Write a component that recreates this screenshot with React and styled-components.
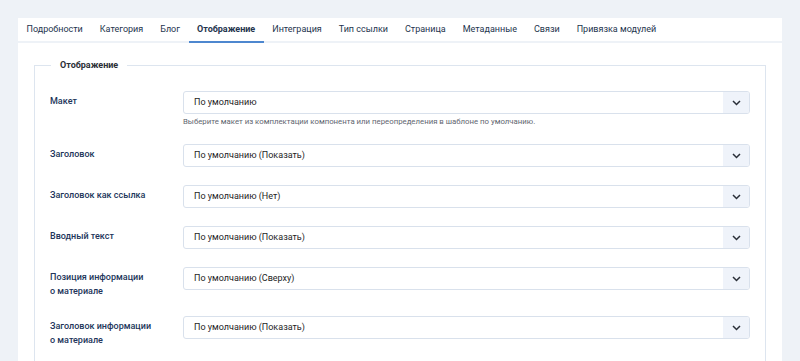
import styled, { createGlobalStyle } from "styled-components"

const GlobalStyle = createGlobalStyle`
  body {
    margin: 0;
    background: #eef2f7;
    font-family: Roboto, "Liberation Sans", sans-serif;
  }
`

const Page = styled.div`
  padding: 18px 18px 0 18px;
  height: 343px;
  overflow: hidden;
`

const Panel = styled.div`
  background: #fff;
  height: 100%;
`

const TabBar = styled.nav`
  display: flex;
  border-bottom: 2px solid #eef2f7;
`

const Tab = styled.div`
  padding: 0 8.5px;
  height: 23px;
  line-height: 23px;
  font-size: 9px;
  color: #24344d;
  font-weight: ${(p) => (p.$active ? 700 : 400)};
  border-bottom: 2px solid ${(p) => (p.$active ? "#4d87cf" : "transparent")};
  margin-bottom: -2px;
  white-space: nowrap;
`

const Content = styled.div`
  padding: 16px 16px 0 16px;
`

const Fieldset = styled.fieldset`
  margin: 0;
  padding: 0 15px 16px 15px;
  border: 1px solid #dde5ef;
  border-bottom: none;
  min-width: 0;
`

const Legend = styled.legend`
  margin-left: 1px;
  padding: 0 9px;
  font-size: 9px;
  font-weight: 700;
  color: #2b2f36;
  line-height: 13px;
`

const Rows = styled.div`
  padding-top: 19px;
`

const Row = styled.div`
  display: grid;
  grid-template-columns: 133px 1fr;
  margin-bottom: 18px;
`

const Label = styled.div`
  padding-top: 3px;
  font-size: 9px;
  font-weight: 500;
  line-height: 14px;
  color: #22355a;
`

const Select = styled.div`
  display: flex;
  height: 21px;
  border: 1px solid #d9e1ec;
  border-radius: 3px;
  overflow: hidden;
`

const Value = styled.div`
  flex: 1;
  padding-left: 10px;
  font-size: 9px;
  line-height: 21px;
  color: #1e1e1e;
`

const Caret = styled.div`
  width: 26px;
  background: #eff3fa;
  display: flex;
  align-items: center;
  justify-content: center;
`

const Help = styled.div`
  margin-top: 3px;
  font-size: 7.8px;
  line-height: 9px;
  color: #5f6670;
`

const tabs = [
  "Подробности",
  "Категория",
  "Блог",
  "Отображение",
  "Интеграция",
  "Тип ссылки",
  "Страница",
  "Метаданные",
  "Связи",
  "Привязка модулей",
]

const fields = [
  { label: "Макет", value: "По умолчанию", help: "Выберите макет из комплектации компонента или переопределения в шаблоне по умолчанию." },
  { label: "Заголовок", value: "По умолчанию (Показать)" },
  { label: "Заголовок как ссылка", value: "По умолчанию (Нет)" },
  { label: "Вводный текст", value: "По умолчанию (Показать)" },
  { label: ["Позиция информации", "о материале"], value: "По умолчанию (Сверху)" },
  { label: ["Заголовок информации", "о материале"], value: "По умолчанию (Показать)" },
]

function Chevron() {
  return (
    <svg width="9" height="6" viewBox="0 0 9 6">
      <path d="M1 1 L4.5 4.5 L8 1" fill="none" stroke="#2a2f38" strokeWidth="1.5" />
    </svg>
  )
}

function App() {
  return (
    <>
      <GlobalStyle />
      <Page>
        <Panel>
          <TabBar>
            {tabs.map((t) => (
              <Tab key={t} $active={t === "Отображение"}>{t}</Tab>
            ))}
          </TabBar>
          <Content>
            <Fieldset>
              <Legend>Отображение</Legend>
              <Rows>
                {fields.map((f, i) => (
                  <Row key={i}>
                    <Label>
                      {Array.isArray(f.label)
                        ? f.label.map((l) => <div key={l}>{l}</div>)
                        : f.label}
                    </Label>
                    <div>
                      <Select>
                        <Value>{f.value}</Value>
                        <Caret><Chevron /></Caret>
                      </Select>
                      {f.help && <Help>{f.help}</Help>}
                    </div>
                  </Row>
                ))}
              </Rows>
            </Fieldset>
          </Content>
        </Panel>
      </Page>
    </>
  )
}

export default App
